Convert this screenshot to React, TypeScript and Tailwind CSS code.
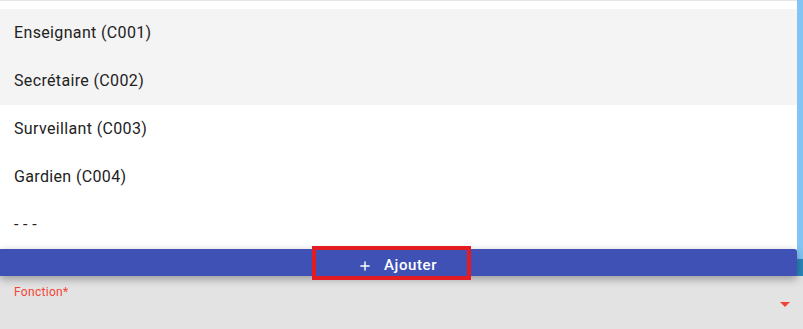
import { Plus } from "lucide-react";

const OPTIONS = [
  { label: "Enseignant (C001)", active: true },
  { label: "Secrétaire (C002)", active: true },
  { label: "Surveillant (C003)", active: false },
  { label: "Gardien (C004)", active: false },
  { label: "- - -", active: false },
];

export default function App() {
  return (
    <div className="h-[329px] w-[803px] overflow-hidden bg-[#e3e3e3] font-['Roboto',sans-serif]">
      <div className="flex h-[276px]">
        <div className="relative z-10 flex w-[797px] flex-col">
          <ul className="border-t border-[#e6e6e6] bg-white pt-2">
            {OPTIONS.map((o) => (
              <li
                key={o.label}
                className={`flex h-12 items-center px-[14px] text-base tracking-[0.35px] text-[#222] ${o.active ? "bg-[#f4f4f4]" : "bg-white"}`}
              >
                {o.label}
              </li>
            ))}
          </ul>
          <div className="flex h-[27px] rounded-tr-[3px] bg-[#3f51b5] pl-[312px] shadow-[0_3px_8px_rgba(0,0,0,0.35)]">
            <button
              type="button"
              className="-mt-[3px] flex h-[34px] w-[159px] items-center gap-[12px] border-4 border-[#e31b23] pl-[42px] pt-[5px] text-[15px] font-medium tracking-[0.6px] text-white"
            >
              <Plus size={14} strokeWidth={2.5} />
              <span>Ajouter</span>
            </button>
          </div>
        </div>
        <div className="flex w-[6px] flex-col">
          <div className="h-[259px] bg-[#80c5f3]" />
          <div className="flex-1 bg-[#2a88bb]" />
        </div>
      </div>
      <div className="relative px-[14px] pt-[3px]">
        <span className="text-[12px] tracking-[0.3px] text-[#f44336]">Fonction*</span>
        <span className="absolute left-[780px] top-[26px] h-0 w-0 border-x-[5px] border-t-[5px] border-x-transparent border-t-[#f44336]" />
      </div>
    </div>
  );
}
